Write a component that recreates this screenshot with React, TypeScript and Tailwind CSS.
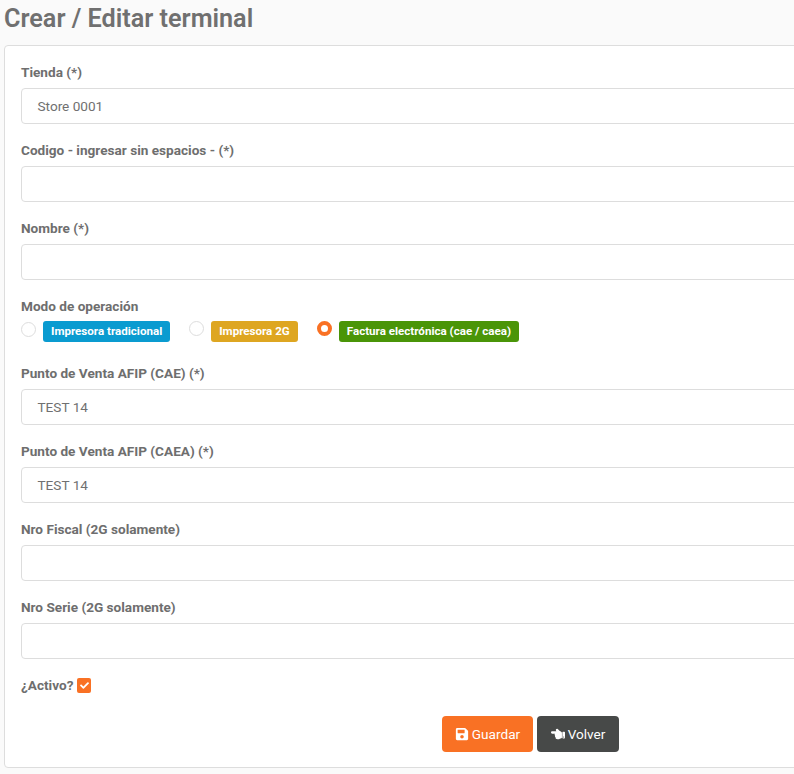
import { FaSave, FaHandPointLeft, FaCheck } from "react-icons/fa";

function Field({ label, value }: { label: string; value?: string }) {
  return (
    <div className="mb-[16px]">
      <label className="block h-[26px] text-[13.6px] leading-[20px] font-bold text-[#6e6e6e]">{label}</label>
      <div className="h-[36px] w-full rounded-[4px] border border-[#dddddd] bg-white pl-[15.5px] text-[13.6px] leading-[34px] text-[#707070]">
        {value}
      </div>
    </div>
  );
}

function Radio({ checked }: { checked?: boolean }) {
  return checked ? (
    <span className="block w-[15px] h-[15px] rounded-full border-[4px] border-[#f97124] bg-white" />
  ) : (
    <span className="block w-[15px] h-[15px] rounded-full border border-[#dddddd] bg-white" />
  );
}

function Badge({ text, color }: { text: string; color: string }) {
  return (
    <span className={`block h-[21px] rounded-[3px] px-[8px] text-[11.6px] leading-[21px] font-bold text-white ${color}`}>{text}</span>
  );
}

export default function App() {
  return (
    <div className="h-[774px] w-[794px] overflow-hidden bg-[#fafafa] font-['Roboto',sans-serif]">
      <h1 className="pl-[4px] pt-[4px] h-[45px] text-[25.2px] leading-[29px] font-semibold text-[#707070]">Crear / Editar terminal</h1>
      <div className="ml-[4px] h-[723px] w-[810px] rounded-[4px] border border-[#dddddd] bg-white pl-[16px] pt-[16px]">
        <Field label="Tienda (*)" value="Store 0001" />
        <Field label="Codigo - ingresar sin espacios - (*)" />
        <Field label="Nombre (*)" />
        <div className="h-[67px]">
          <label className="block h-[25px] text-[13.6px] leading-[20px] font-bold text-[#6e6e6e]">Modo de operación</label>
          <div className="flex items-start">
            <div className="mt-[1px]"><Radio /></div>
            <div className="ml-[7px]"><Badge text="Impresora tradicional" color="bg-[#0a9bd0]" /></div>
            <div className="ml-[19px]"><Radio /></div>
            <div className="ml-[7px]"><Badge text="Impresora 2G" color="bg-[#dea621]" /></div>
            <div className="ml-[19px]"><Radio checked /></div>
            <div className="ml-[7px]"><Badge text="Factura electrónica (cae / caea)" color="bg-[#4a9508]" /></div>
          </div>
        </div>
        <Field label="Punto de Venta AFIP (CAE) (*)" value="TEST 14" />
        <Field label="Punto de Venta AFIP (CAEA) (*)" value="TEST 14" />
        <Field label="Nro Fiscal (2G solamente)" />
        <Field label="Nro Serie (2G solamente)" />
        <div className="flex h-[20px] items-center">
          <span className="text-[13.6px] leading-[20px] font-bold text-[#6e6e6e]">¿Activo?</span>
          <span className="ml-[4px] flex h-[15px] w-[14px] items-center justify-center rounded-[2px] bg-[#f97124]">
            <FaCheck className="text-white text-[9px]" />
          </span>
        </div>
        <div className="mt-[21px] ml-[421px] flex gap-[4px]">
          <button className="flex h-[36px] w-[91px] items-center justify-center gap-[3px] rounded-[4px] bg-[#f97124] text-[13.6px] text-white">
            <FaSave className="text-[14px]" /> Guardar
          </button>
          <button className="flex h-[36px] w-[82px] items-center justify-center gap-[3px] rounded-[4px] bg-[#474948] text-[13.6px] text-white">
            <FaHandPointLeft className="text-[14px]" /> Volver
          </button>
        </div>
      </div>
    </div>
  );
}
